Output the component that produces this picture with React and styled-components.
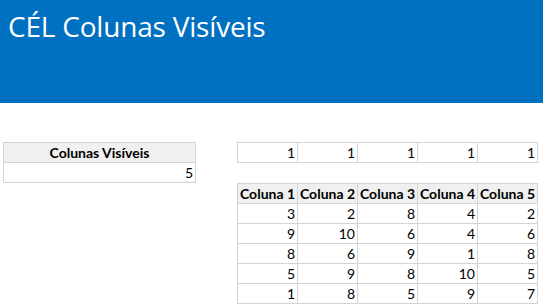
import React from 'react';
import styled, { createGlobalStyle } from 'styled-components';

const GlobalStyle = createGlobalStyle`
  body {
    margin: 0;
    background: #fff;
    font-family: Lato, "Open Sans", sans-serif;
  }
`;

const Banner = styled.header`
  height: 103px;
  background: #0070c0;
  color: #fff;
  padding: 6px 0 0 8px;
  box-sizing: border-box;
`;

const Title = styled.h1`
  margin: 0;
  font-family: "Open Sans", sans-serif;
  font-weight: 400;
  font-size: 28px;
  letter-spacing: -0.2px;
  line-height: 40px;
`;

const Body = styled.main`
  display: flex;
  align-items: flex-start;
  gap: 41px;
  padding: 39px 0 0 3px;
`;

const Grid = styled.div`
  display: grid;
  grid-template-columns: repeat(${({ cols }) => cols}, ${({ colWidth }) => colWidth}px);
  border-left: 1px solid #d4d4d4;
  border-top: 1px solid #d4d4d4;
  width: max-content;
`;

const Cell = styled.div`
  height: 19px;
  line-height: 19px;
  border-right: 1px solid #d4d4d4;
  border-bottom: 1px solid #d4d4d4;
  font-size: 14px;
  color: #000;
  padding: 0 2px;
  text-align: ${({ head }) => (head ? 'center' : 'right')};
  font-weight: ${({ head }) => (head ? 700 : 400)};
  background: ${({ head }) => (head ? '#f0f0f0' : '#fff')};
  white-space: nowrap;
  overflow: hidden;
`;

const Stack = styled.div`
  display: flex;
  flex-direction: column;
  gap: 20px;
`;

const flags = [1, 1, 1, 1, 1];
const headers = ['Coluna 1', 'Coluna 2', 'Coluna 3', 'Coluna 4', 'Coluna 5'];
const rows = [
  [3, 2, 8, 4, 2],
  [9, 10, 6, 4, 6],
  [8, 6, 9, 1, 8],
  [5, 9, 8, 10, 5],
  [1, 8, 5, 9, 7],
];

export default function App() {
  return (
    <>
      <GlobalStyle />
      <Banner>
        <Title>CÉL Colunas Visíveis</Title>
      </Banner>
      <Body>
        <Grid cols={1} colWidth={192}>
          <Cell head>Colunas Visíveis</Cell>
          <Cell>5</Cell>
        </Grid>
        <Stack>
          <Grid cols={5} colWidth={60}>
            {flags.map((f, i) => (
              <Cell key={i}>{f}</Cell>
            ))}
          </Grid>
          <Grid cols={5} colWidth={60}>
            {headers.map(h => (
              <Cell head key={h}>{h}</Cell>
            ))}
            {rows.map((r, ri) =>
              r.map((v, ci) => <Cell key={`${ri}-${ci}`}>{v}</Cell>),
            )}
          </Grid>
        </Stack>
      </Body>
    </>
  );
}
